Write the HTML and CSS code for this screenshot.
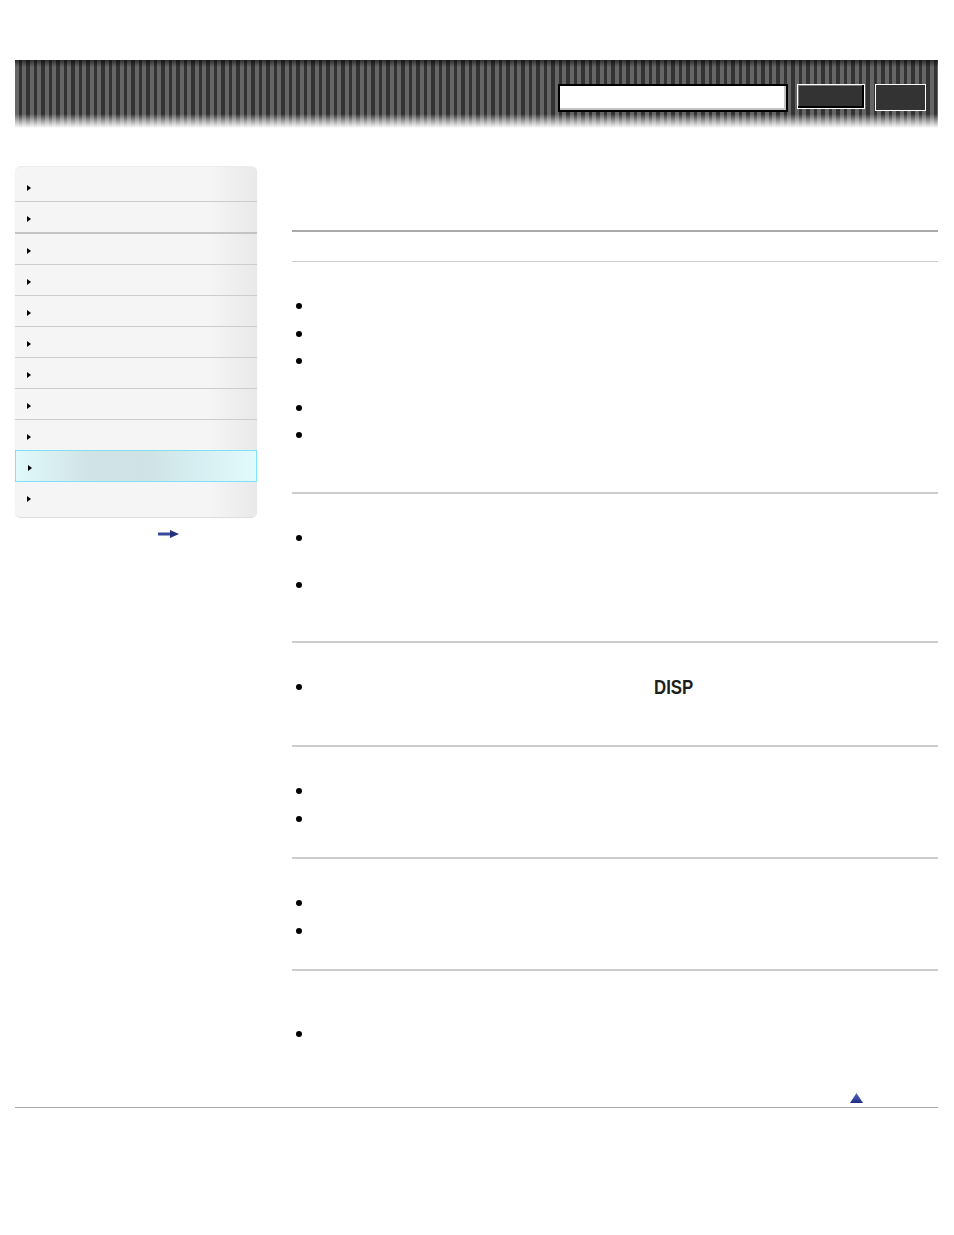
FILE: index.html
```html
<!DOCTYPE html>
<html lang="en">
<head>
    <meta charset="UTF-8">
    <meta name="viewport" content="width=device-width, initial-scale=1.0">
    <title>Help Guide</title>
    <link rel="stylesheet" href="styles.css">
</head>
<body>
    <div class="page">
        <header class="header">
            <form class="search">
                <input type="text" class="search-input" aria-label="Search">
                <button type="button" class="search-btn" aria-label="Search"></button>
                <button type="button" class="print-btn" aria-label="Print"></button>
            </form>
        </header>

        <div class="wrap">
            <aside class="side">
                <ul class="nav">
                    <li class="first"><a href="#"></a></li>
                    <li class="thick"><a href="#"></a></li>
                    <li><a href="#"></a></li>
                    <li><a href="#"></a></li>
                    <li><a href="#"></a></li>
                    <li><a href="#"></a></li>
                    <li><a href="#"></a></li>
                    <li><a href="#"></a></li>
                    <li><a href="#"></a></li>
                    <li class="current"><a href="#"></a></li>
                    <li class="last"><a href="#"></a></li>
                </ul>
                <a href="#" class="more" aria-label="Next">
                    <svg width="21" height="8" viewBox="0 0 21 8">
                        <rect x="0" y="2.5" width="13" height="3" fill="#3a4a9a"/>
                        <polygon points="12,0 21,4 12,8" fill="#24307e"/>
                    </svg>
                </a>
            </aside>

            <main class="main">
                <div class="title"></div>
                <div class="intro"></div>

                <section class="block first-block">
                    <ul class="points">
                        <li></li>
                        <li></li>
                        <li class="tall"></li>
                        <li></li>
                        <li class="tall"></li>
                    </ul>
                </section>

                <section class="block short-block">
                    <ul class="points">
                        <li class="tall"></li>
                        <li class="tall"></li>
                    </ul>
                </section>

                <section class="block">
                    <ul class="points">
                        <li class="tall"><span class="key">DISP</span></li>
                    </ul>
                </section>

                <section class="block">
                    <ul class="points">
                        <li></li>
                        <li></li>
                    </ul>
                </section>

                <section class="block">
                    <ul class="points">
                        <li></li>
                        <li></li>
                    </ul>
                </section>

                <section class="block last-block">
                    <p class="lead"></p>
                    <ul class="points">
                        <li></li>
                    </ul>
                </section>

                <div class="pagetop">
                    <a href="#" aria-label="Page top">
                        <svg width="13" height="10" viewBox="0 0 13 10">
                            <defs>
                                <linearGradient id="tg" x1="0" y1="0" x2="0" y2="1">
                                    <stop offset="0" stop-color="#5b6bc0"/>
                                    <stop offset="1" stop-color="#1c2a85"/>
                                </linearGradient>
                            </defs>
                            <polygon points="6.5,0 13,10 0,10" fill="url(#tg)"/>
                        </svg>
                    </a>
                </div>
            </main>
        </div>

        <footer class="footer"></footer>
    </div>
</body>
</html>
```

FILE: styles.css
```css
body {
    margin: 0;
    font-family: 'Liberation Sans', Arial, sans-serif;
    font-size: 13px;
    color: #333;
    background-color: white;
}
.page {
    width: 923px;
    margin-left: 15px;
    padding-top: 60px;
}

/* header */
.header {
    height: 68px;
    box-sizing: border-box;
    padding: 24px 12px 0 0;
    display: flex;
    justify-content: flex-end;
    background:
        linear-gradient(to bottom, rgba(0,0,0,0.55) 0, rgba(0,0,0,0) 7px, rgba(0,0,0,0) 54px, rgba(255,255,255,0.6) 62px, #fff 68px),
        repeating-linear-gradient(to right, #666 0, #666 4px, #333 4px, #333 7.5px);
}
.search {
    display: flex;
    align-items: flex-start;
    margin: 0;
}
.search-input {
    width: 230px;
    height: 28px;
    box-sizing: border-box;
    border: 2px solid #000;
    box-shadow: inset -2px -2px 0 #c4c4c4;
    background-color: white;
    padding: 0;
    margin: 0 9px 0 0;
}
.search-btn {
    width: 68px;
    height: 25px;
    box-sizing: border-box;
    border: 1px solid #fff;
    background-color: #333;
    box-shadow: inset -2px -2px 0 #000, inset 1px 1px 0 #777;
    padding: 0;
    margin: 0 10px 0 0;
}
.print-btn {
    width: 51px;
    height: 27px;
    box-sizing: border-box;
    border: 1px solid #fff;
    background-color: #333;
    padding: 0;
    margin: 0;
}

/* layout */
.wrap {
    display: flex;
    align-items: flex-start;
    gap: 35px;
    margin-top: 38px;
}

/* side menu */
.side {
    width: 242px;
    flex: none;
}
.nav {
    list-style: none;
    margin: 0;
    padding: 0;
    border-radius: 6px;
    background: linear-gradient(to right, #f5f5f5 0, #f5f5f5 80%, #e9e9e9 100%);
    box-shadow: 0 1px 1px rgba(0,0,0,0.14), inset 0 1px 0 #ececec;
    overflow: hidden;
}
.nav li {
    border-bottom: 1px solid #cdcdcd;
}
.nav li a {
    display: flex;
    align-items: center;
    height: 30px;
    padding: 4px 0 0 12px;
    box-sizing: border-box;
    text-decoration: none;
}
.nav li a::before {
    content: "";
    border-left: 4px solid #000;
    border-top: 3px solid transparent;
    border-bottom: 3px solid transparent;
}
.nav li.first {
    padding-top: 5px;
}
.nav li.thick {
    border-bottom: 2px solid #c4c4c4;
}
.nav li.current {
    margin-top: -1px;
    border: 1px solid #80e1f6;
    background: linear-gradient(to right, #e0f9fb 0, #d0e4e7 30%, #cfe3e6 55%, #d6eef1 75%, #e1fafc 100%);
}
.nav li.last {
    border-bottom: none;
    padding-bottom: 5px;
}
.more {
    display: block;
    margin: 13px 0 0 143px;
    width: 21px;
    line-height: 0;
}

/* main */
.main {
    flex: 1;
}
.title {
    height: 64px;
    border-bottom: 2px solid #aaa;
}
.intro {
    height: 29px;
    border-bottom: 1px solid #ccc;
}
.block {
    border-top: 2px solid #ccc;
    padding: 34px 0 28px;
}
.first-block {
    border-top: none;
    padding-bottom: 27px;
}
.short-block {
    padding-bottom: 26px;
}
.lead {
    height: 19px;
    margin: 0;
}
.points {
    list-style: none;
    margin: 0;
    padding: 0;
}
.points li {
    display: flex;
    min-height: 20px;
    line-height: 20px;
    margin-bottom: 7px;
}
.points li:first-child:not(.tall):not(:last-child) {
    margin-bottom: 8px;
}
.points li:last-child {
    margin-bottom: 0;
}
.points li::before {
    content: "";
    flex: none;
    width: 6px;
    height: 6px;
    border-radius: 50%;
    background-color: #000;
    margin: 7px 11px 0 4px;
}
.points li.tall {
    min-height: 40px;
}
.key {
    display: inline-block;
    height: 20px;
    margin-left: 341px;
    font-size: 21px;
    line-height: 19px;
    font-weight: bold;
    color: #1e1e1e;
    transform: scaleX(0.8);
    transform-origin: left top;
}
.pagetop {
    display: flex;
    justify-content: flex-end;
    padding: 21px 75px 4px 0;
}
.pagetop a {
    line-height: 0;
}

.footer {
    border-top: 1px solid #aaa;
    height: 80px;
}
```
